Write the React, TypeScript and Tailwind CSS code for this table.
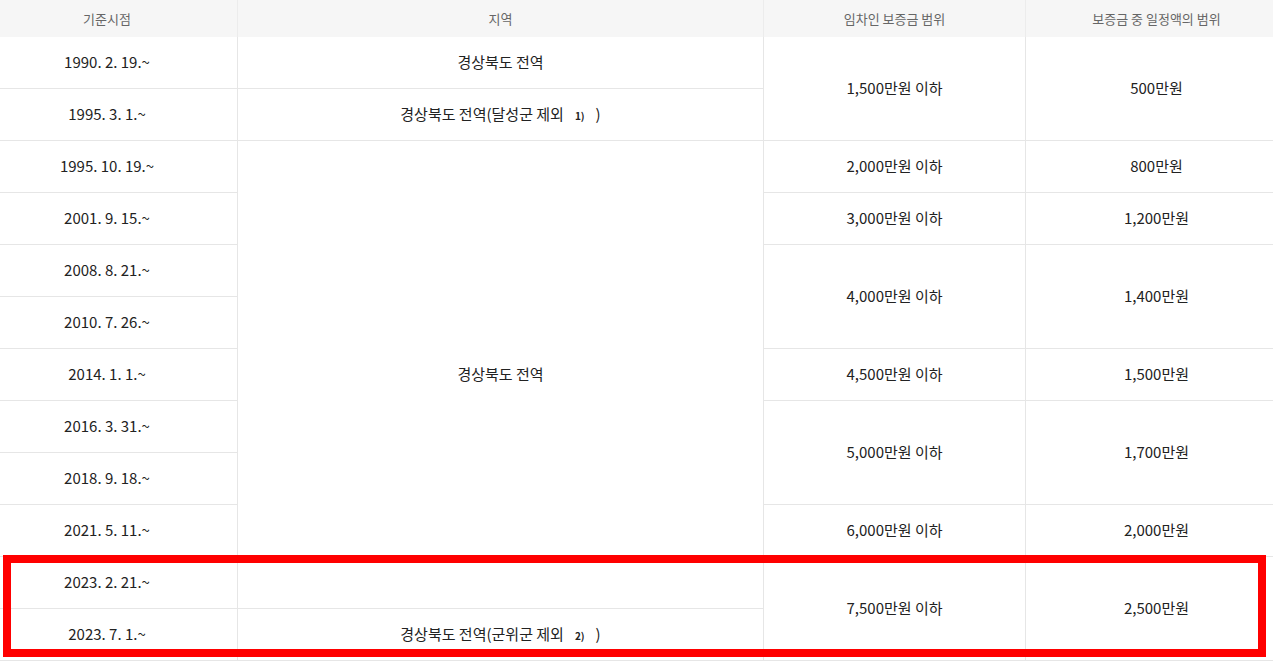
import React from "react";

const cell = "flex items-center justify-center border-b border-[#e6e6e6] text-[15px] text-[#222]";
const bl = " border-l";

function Note({ n }: { n: string }) {
  return (
    <span className="inline-block ml-[11px] mr-[11px] text-[10px] font-bold translate-y-[1px]">{n}</span>
  );
}

export default function App() {
  const dates = [
    "1990. 2. 19.~",
    "1995. 3. 1.~",
    "1995. 10. 19.~",
    "2001. 9. 15.~",
    "2008. 8. 21.~",
    "2010. 7. 26.~",
    "2014. 1. 1.~",
    "2016. 3. 31.~",
    "2018. 9. 18.~",
    "2021. 5. 11.~",
    "2023. 2. 21.~",
    "2023. 7. 1.~",
  ];
  const head = "row-start-1 flex items-center justify-center bg-[#f6f6f6] text-[13px] text-[#666]";
  return (
    <div
      className="relative w-[1273px] h-[664px] bg-white overflow-hidden"
      style={{ fontFamily: '"Noto Sans CJK KR", "Noto Sans", sans-serif' }}
    >
      <div className="ml-[-23px] w-[1310px] grid grid-cols-[260px_526px_262px_262px] grid-rows-[37px_repeat(12,52px)]">
        <div className={head + " col-start-1"}>기준시점</div>
        <div className={head + " col-start-2 border-l border-[#ececec]"}>지역</div>
        <div className={head + " col-start-3 border-l border-[#ececec]"}>임차인 보증금 범위</div>
        <div className={head + " col-start-4 border-l border-[#ececec]"}>보증금 중 일정액의 범위</div>

        {dates.map((d, i) => (
          <div key={d} className={cell + " col-start-1"} style={{ gridRowStart: i + 2 }}>
            {d}
          </div>
        ))}

        <div className={cell + bl + " col-start-2 row-start-2"}>경상북도 전역</div>
        <div className={cell + bl + " col-start-2 row-start-3"}>
          <span>경상북도 전역(달성군 제외</span>
          <Note n="1)" />
          <span>)</span>
        </div>
        <div className={cell + bl + " col-start-2 row-start-4 row-span-9"}>경상북도 전역</div>
        <div className={cell + bl + " col-start-2 row-start-13"}>
          <span>경상북도 전역(군위군 제외</span>
          <Note n="2)" />
          <span>)</span>
        </div>

        <div className={cell + bl + " col-start-3 row-start-2 row-span-2"}>1,500만원 이하</div>
        <div className={cell + bl + " col-start-3 row-start-4"}>2,000만원 이하</div>
        <div className={cell + bl + " col-start-3 row-start-5"}>3,000만원 이하</div>
        <div className={cell + bl + " col-start-3 row-start-6 row-span-2"}>4,000만원 이하</div>
        <div className={cell + bl + " col-start-3 row-start-8"}>4,500만원 이하</div>
        <div className={cell + bl + " col-start-3 row-start-9 row-span-2"}>5,000만원 이하</div>
        <div className={cell + bl + " col-start-3 row-start-11"}>6,000만원 이하</div>
        <div className={cell + bl + " col-start-3 row-start-12 row-span-2"}>7,500만원 이하</div>

        <div className={cell + bl + " col-start-4 row-start-2 row-span-2"}>500만원</div>
        <div className={cell + bl + " col-start-4 row-start-4"}>800만원</div>
        <div className={cell + bl + " col-start-4 row-start-5"}>1,200만원</div>
        <div className={cell + bl + " col-start-4 row-start-6 row-span-2"}>1,400만원</div>
        <div className={cell + bl + " col-start-4 row-start-8"}>1,500만원</div>
        <div className={cell + bl + " col-start-4 row-start-9 row-span-2"}>1,700만원</div>
        <div className={cell + bl + " col-start-4 row-start-11"}>2,000만원</div>
        <div className={cell + bl + " col-start-4 row-start-12 row-span-2"}>2,500만원</div>
      </div>

      <div className="absolute left-[3px] top-[555px] w-[1263px] h-[102px] border-[8px] border-[#ff0000]" />
    </div>
  );
}
